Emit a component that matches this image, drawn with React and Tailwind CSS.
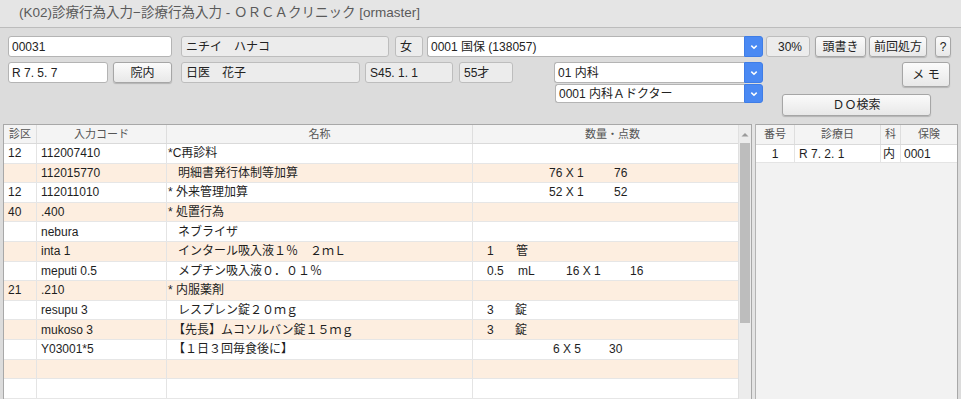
import React from "react";

const FONT = "font-['Liberation_Sans','Noto_Sans_CJK_JP',sans-serif]";

function Chevron() {
  return (
    <svg width="8" height="6" viewBox="0 0 8 6" className="block">
      <path d="M1.3 1.6 L4 4.2 L6.7 1.6" fill="none" stroke="#ffffff" strokeWidth="1.5" />
    </svg>
  );
}

function Select({ className, children }) {
  return (
    <div className={`flex ${className}`}>
      <div className="flex-1 flex items-center bg-white border border-[#b4b4b4] border-r-0 rounded-l-[3px] pl-[3px] text-[12px] text-[#222]">
        {children}
      </div>
      <div className="w-[19px] flex items-center justify-center bg-[#4a89f3] rounded-r-[3px] border border-[#3f7de6]">
        <Chevron />
      </div>
    </div>
  );
}

const btn =
  "flex items-center justify-center rounded-[3px] border border-[#a6a6a6] bg-linear-to-b from-[#fbfbfb] to-[#e8e8e8] shadow-[0_1px_1px_rgba(0,0,0,0.18)] text-[12px] text-[#222]";
const inWhite =
  "h-[21px] flex items-center rounded-[3px] border border-[#b4b4b4] bg-white pl-[3px] text-[12px] text-[#222]";
const inGray =
  "h-[21px] flex items-center rounded-[3px] border border-[#bdbdbd] bg-[#ececec] pl-[4px] text-[12px] text-[#222]";

const rows = [
  { bg: "bg-white", k: "12", code: "112007410", name: "*C再診料", ind: "pl-[1px]", q: null },
  {
    bg: "bg-[#fdeee0]", k: "", code: "112015770", name: "明細書発行体制等加算", ind: "pl-[11px]",
    q: (<><span className="ml-[76px] inline-block w-[65px]">76 X 1</span><span>76</span></>),
  },
  {
    bg: "bg-white", k: "12", code: "112011010", name: "* 外来管理加算", ind: "pl-[1px]",
    q: (<><span className="ml-[76px] inline-block w-[65px]">52 X 1</span><span>52</span></>),
  },
  { bg: "bg-[#fdeee0]", k: "40", code: ".400", name: "* 処置行為", ind: "pl-[1px]", q: null },
  { bg: "bg-white", k: "", code: "nebura", name: "ネブライザ", ind: "pl-[11px]", q: null },
  {
    bg: "bg-[#fdeee0]", k: "", code: "inta 1", name: "インタール吸入液１％　２ｍＬ", ind: "pl-[11px]",
    q: (<><span className="ml-[14px] inline-block w-[29px]">1</span><span>管</span></>),
  },
  {
    bg: "bg-white", k: "", code: "meputi 0.5", name: "メプチン吸入液０．０１％", ind: "pl-[11px]",
    q: (
      <>
        <span className="ml-[14px] inline-block w-[31px]">0.5</span>
        <span className="inline-block w-[48px]">mL</span>
        <span className="inline-block w-[64px]">16 X 1</span>
        <span>16</span>
      </>
    ),
  },
  { bg: "bg-[#fdeee0]", k: "21", code: ".210", name: "* 内服薬剤", ind: "pl-[1px]", q: null },
  {
    bg: "bg-white", k: "", code: "resupu 3", name: "レスプレン錠２０ｍｇ", ind: "pl-[11px]",
    q: (<><span className="ml-[14px] inline-block w-[28px]">3</span><span>錠</span></>),
  },
  {
    bg: "bg-[#fdeee0]", k: "", code: "mukoso 3", name: "【先長】ムコソルバン錠１５ｍｇ", ind: "pl-[6px]",
    q: (<><span className="ml-[14px] inline-block w-[28px]">3</span><span>錠</span></>),
  },
  {
    bg: "bg-white", k: "", code: "Y03001*5", name: "【１日３回毎食後に】", ind: "pl-[6px]",
    q: (<><span className="ml-[80px] inline-block w-[56px]">6 X 5</span><span>30</span></>),
  },
  { bg: "bg-[#fdeee0]", k: "", code: "", name: "", ind: "pl-[1px]", q: null },
  { bg: "bg-white", k: "", code: "", name: "", ind: "pl-[1px]", q: null },
];

export default function App() {
  return (
    <div className={`${FONT} w-[961px] h-[399px] overflow-hidden bg-[#dcdcdc]`}>
      {/* title bar */}
      <div className="h-[28px] bg-[#e5e5e5] border-b border-[#bcbcbc] pl-[19px] flex items-center text-[13.5px] text-[#5a5a5a]">
        (K02)診療行為入力−診療行為入力 - ＯＲＣＡクリニック [ormaster]
      </div>

      <div className="pt-[8px] pl-[8px]">
        {/* row 1 */}
        <div className="flex h-[21px]">
          <div className={`${inWhite} w-[164px]`}>00031</div>
          <div className={`${inGray} w-[208px] ml-[9px]`}>ニチイ　ハナコ</div>
          <div className={`${inGray} w-[28px] ml-[6px]`}>女</div>
          <Select className="w-[336px] ml-[4px] h-[21px]">0001 国保 (138057)</Select>
          <div className={`${inGray} w-[44px] ml-[3px] justify-center pl-0`}>30%</div>
          <div className={`${btn} w-[51px] ml-[5px] h-[21px]`}>頭書き</div>
          <div className={`${btn} w-[58px] ml-[3px] h-[21px]`}>前回処方</div>
          <div className={`${btn} w-[16px] ml-[8px] h-[21px]`}>?</div>
        </div>

        {/* row 2 */}
        <div className="flex items-start mt-[5px]">
          <div className={`${inWhite} w-[100px]`}>R 7. 5. 7</div>
          <div className={`${btn} w-[59px] ml-[5px] h-[21px]`}>院内</div>
          <div className={`${inGray} w-[179px] ml-[9px]`}>日医　花子</div>
          <div className={`${inGray} w-[88px] ml-[5px]`}>S45. 1. 1</div>
          <div className={`${inGray} w-[54px] ml-[6px]`}>55才</div>
          <div className="w-[209px] ml-[41px] flex flex-col">
            <Select className="h-[21px]">01 内科</Select>
            <Select className="h-[19px] mt-[1px] ml-[1px]">0001 内科Ａドクター</Select>
          </div>
          <div className="flex-1 flex flex-col">
            <div className={`${btn} w-[48px] h-[25px] ml-[139px]`}>メ モ</div>
            <div className={`${btn} w-[149px] h-[22px] ml-[19px] mt-[7px]`}>ＤＯ検索</div>
          </div>
        </div>
      </div>

      {/* tables */}
      <div className="flex pl-[3px] mt-[8px] h-[300px]">
        {/* left pane */}
        <div className="w-[749px] flex border border-[#a8a8a8] bg-white">
          <div className="w-[734px] text-[12px] text-[#1e1e1e]">
            <div className="flex h-[19px] bg-[#f4f4f4] border-b border-[#dadada] text-[11px] text-[#555]">
              <div className="w-[33px] border-r border-[#dedede] flex items-center justify-center">診区</div>
              <div className="w-[130px] border-r border-[#dedede] flex items-center justify-center">入力コード</div>
              <div className="w-[306px] border-r border-[#dedede] flex items-center justify-center">名称</div>
              <div className="flex-1 flex items-center justify-center pl-[14px]">数量・点数</div>
            </div>
            {rows.map((r, i) => (
              <div key={i} className={`flex h-[19.6px] border-b border-[#e6e6e6] ${r.bg}`}>
                <div className="w-[33px] border-r border-[#e4e4e4] flex items-center pl-[4px]">{r.k}</div>
                <div className="w-[130px] border-r border-[#e4e4e4] flex items-center pl-[4px]">{r.code}</div>
                <div className={`w-[306px] border-r border-[#e4e4e4] flex items-center ${r.ind}`}>{r.name}</div>
                <div className="flex-1 flex items-center whitespace-nowrap">{r.q}</div>
              </div>
            ))}
          </div>
          {/* scrollbar */}
          <div className="flex-1 bg-[#ececec] border-l border-[#e0e0e0] flex flex-col items-center">
            <div className="h-[18px] flex items-center justify-center">
              <svg width="8" height="5" viewBox="0 0 8 5">
                <path d="M0.5 4.5 L4 1 L7.5 4.5 Z" fill="#9a9a9a" />
              </svg>
            </div>
            <div className="w-[10px] h-[180px] bg-[#bdbdbd]" />
          </div>
        </div>

        {/* splitter */}
        <div className="w-[4px] bg-[#e4e4e4] border-r border-[#b4b4b4]" />

        {/* right pane */}
        <div className="w-[202px] bg-[#f2f2f2] border border-l-0 border-[#a8a8a8] text-[12px] text-[#1e1e1e]">
          <div className="flex h-[20px] bg-[#f4f4f4] border-b border-[#dadada] text-[11px] text-[#555]">
            <div className="w-[39px] border-r border-[#dedede] flex items-center justify-center">番号</div>
            <div className="w-[86px] border-r border-[#dedede] flex items-center justify-center">診療日</div>
            <div className="w-[20px] border-r border-[#dedede] flex items-center justify-center">科</div>
            <div className="flex-1 flex items-center justify-center">保険</div>
          </div>
          <div className="flex h-[18px] bg-white border-b border-[#e4e4e4]">
            <div className="w-[39px] border-r border-[#e4e4e4] flex items-center justify-center">1</div>
            <div className="w-[86px] border-r border-[#e4e4e4] flex items-center pl-[4px]">R 7. 2. 1</div>
            <div className="w-[20px] border-r border-[#e4e4e4] flex items-center pl-[2px]">内</div>
            <div className="flex-1 flex items-center pl-[3px]">0001</div>
          </div>
        </div>
      </div>
    </div>
  );
}
